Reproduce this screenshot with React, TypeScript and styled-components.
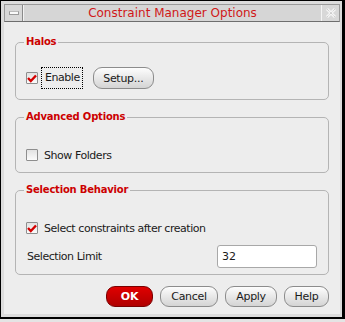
import { FC } from 'react';
import styled, { createGlobalStyle } from 'styled-components';

const GlobalStyle = createGlobalStyle`
  html, body {
    margin: 0;
    padding: 0;
    background: #e4e4e4;
  }
  * {
    box-sizing: border-box;
  }
`;

interface CheckProps {
  checked?: boolean;
}

const CheckBox: FC<CheckProps> = ({ checked }) => (
  <Box>
    {checked && (
      <svg width='10' height='10' viewBox='0 0 10 10'>
        <path d='M1 5 L3.8 8 L9 2.5' stroke='#d40000' strokeWidth='2.4' fill='none' />
      </svg>
    )}
  </Box>
);

const App: FC = () => {
  return (
    <>
      <GlobalStyle />
      <Window>
        <TitleBar>
          <TitleButton>
            <MinimizeGlyph />
          </TitleButton>
          <Title>Constraint Manager Options</Title>
          <TitleButton>
            <svg width='12' height='12' viewBox='0 0 12 12'>
              <path d='M2 2 L10 10 M10 2 L2 10' stroke='#f4f4f4' strokeWidth='3' />
              <path d='M2 2 L10 10 M10 2 L2 10' stroke='#bdbdbd' strokeWidth='1' strokeDasharray='1 1' />
            </svg>
          </TitleButton>
        </TitleBar>
        <Body>
          <Group height={58} top={20} pad={27}>
            <Legend>Halos</Legend>
            <Row>
              <CheckBox checked />
              <FocusLabel>Enable</FocusLabel>
              <Button width={61}>Setup...</Button>
            </Row>
          </Group>
          <Group height={56} top={17} pad={29}>
            <Legend>Advanced Options</Legend>
            <Row>
              <CheckBox />
              <Label>Show Folders</Label>
            </Row>
          </Group>
          <Group height={85} top={17} pad={29}>
            <Legend>Selection Behavior</Legend>
            <Row>
              <CheckBox checked />
              <Label>Select constraints after creation</Label>
            </Row>
            <FieldRow>
              <span>Selection Limit</span>
              <Input defaultValue='32' />
            </FieldRow>
          </Group>
          <Actions>
            <Button width={47} primary>
              OK
            </Button>
            <Button width={58}>Cancel</Button>
            <Button width={52}>Apply</Button>
            <Button width={45}>Help</Button>
          </Actions>
        </Body>
      </Window>
    </>
  );
};

const Window = styled.div`
  width: 345px;
  height: 319px;
  border: 1px solid #000;
  border-right-width: 3px;
  border-bottom-width: 2px;
  background: #dcdcdc;
  padding: 3px 2px 3px 3px;
  display: flex;
  flex-direction: column;
  font-family: 'DejaVu Sans', sans-serif;
  font-size: 11px;
  color: #1a1a1a;
`;

const TitleBar = styled.div`
  height: 18px;
  display: flex;
  background: #d6d6d6;
  border: 1px solid #9a9a9a;
  border-bottom-color: #6e6e6e;
`;

const TitleButton = styled.div`
  width: 18px;
  display: flex;
  align-items: center;
  justify-content: center;
  background: #d8d8d8;
  border-right: 1px solid #8a8a8a;

  &:last-child {
    border-right: none;
    border-left: 1px solid #f4f4f4;
  }
`;

const MinimizeGlyph = styled.div`
  width: 10px;
  height: 4px;
  background: #fafafa;
  border: 1px solid #9a9a9a;
  border-top-color: #bbbbbb;
`;

const Title = styled.div`
  flex: 1;
  text-align: center;
  color: #d01818;
  font-size: 12px;
  line-height: 16px;
  border-left: 1px solid #f2f2f2;
`;

const Body = styled.div`
  flex: 1;
  background: #ededed;
  padding: 0 11px 0 11px;
  display: flex;
  flex-direction: column;
`;

const Group = styled.div<{ height: number; top: number; pad: number }>`
  position: relative;
  height: ${({ height }) => height}px;
  margin-top: ${({ top }) => top}px;
  padding: ${({ pad }) => pad}px 11px 0;
  border: 1px solid #b4b4b4;
  border-radius: 5px;
`;

const Legend = styled.div`
  position: absolute;
  top: -8px;
  left: 8px;
  padding: 0 2px;
  background: #ededed;
  color: #cc0000;
  font-weight: bold;
  font-size: 10px;
  line-height: 14px;
  letter-spacing: -0.2px;
`;

const Row = styled.div`
  display: flex;
  align-items: center;
  height: 16px;
`;

const Box = styled.div`
  width: 12px;
  height: 12px;
  border: 1px solid #8e8e8e;
  border-radius: 1px;
  background: linear-gradient(#e2e2e2, #fbfbfb);
  display: flex;
  align-items: flex-end;
  justify-content: center;
  margin-right: 6px;
  margin-left: -1px;

  svg {
    flex-shrink: 0;
  }
`;

const Label = styled.span`
  letter-spacing: -0.45px;
`;

const FocusLabel = styled.span`
  height: 22px;
  line-height: 20px;
  padding: 0 2px 0 3px;
  margin-left: -3px;
  border: 1px dotted #000;
  letter-spacing: -0.45px;
`;

const Button = styled.button<{ width: number; primary?: boolean }>`
  width: ${({ width }) => width}px;
  height: 21px;
  margin-left: ${({ primary }) => (primary ? 0 : 7)}px;
  border-radius: 9px;
  border: 1px solid ${({ primary }) => (primary ? '#7a0000' : '#8c8c8c')};
  background: ${({ primary }) =>
    primary ? 'linear-gradient(#e00000, #b00000)' : 'linear-gradient(#fdfdfd, #e6e6e6 55%, #d4d4d4)'};
  color: ${({ primary }) => (primary ? '#fff' : '#1a1a1a')};
  font-family: 'DejaVu Sans', sans-serif;
  font-size: 11px;
  font-weight: ${({ primary }) => (primary ? 'bold' : 'normal')};
  padding: 0;
  letter-spacing: -0.3px;

  ${Row} & {
    margin-left: 10px;
    height: 22px;
  }
`;

const FieldRow = styled.div`
  display: flex;
  align-items: center;
  justify-content: space-between;
  margin-top: 9px;
  letter-spacing: -0.45px;
`;

const Input = styled.input`
  width: 100px;
  height: 23px;
  border: 1px solid #a8a8a8;
  border-radius: 3px;
  background: #fff;
  font-family: 'DejaVu Sans', sans-serif;
  font-size: 11px;
  padding: 0 4px;
  color: #1a1a1a;
  outline: none;
`;

const Actions = styled.div`
  display: flex;
  justify-content: flex-end;
  margin-top: 11px;
`;

export default App;
